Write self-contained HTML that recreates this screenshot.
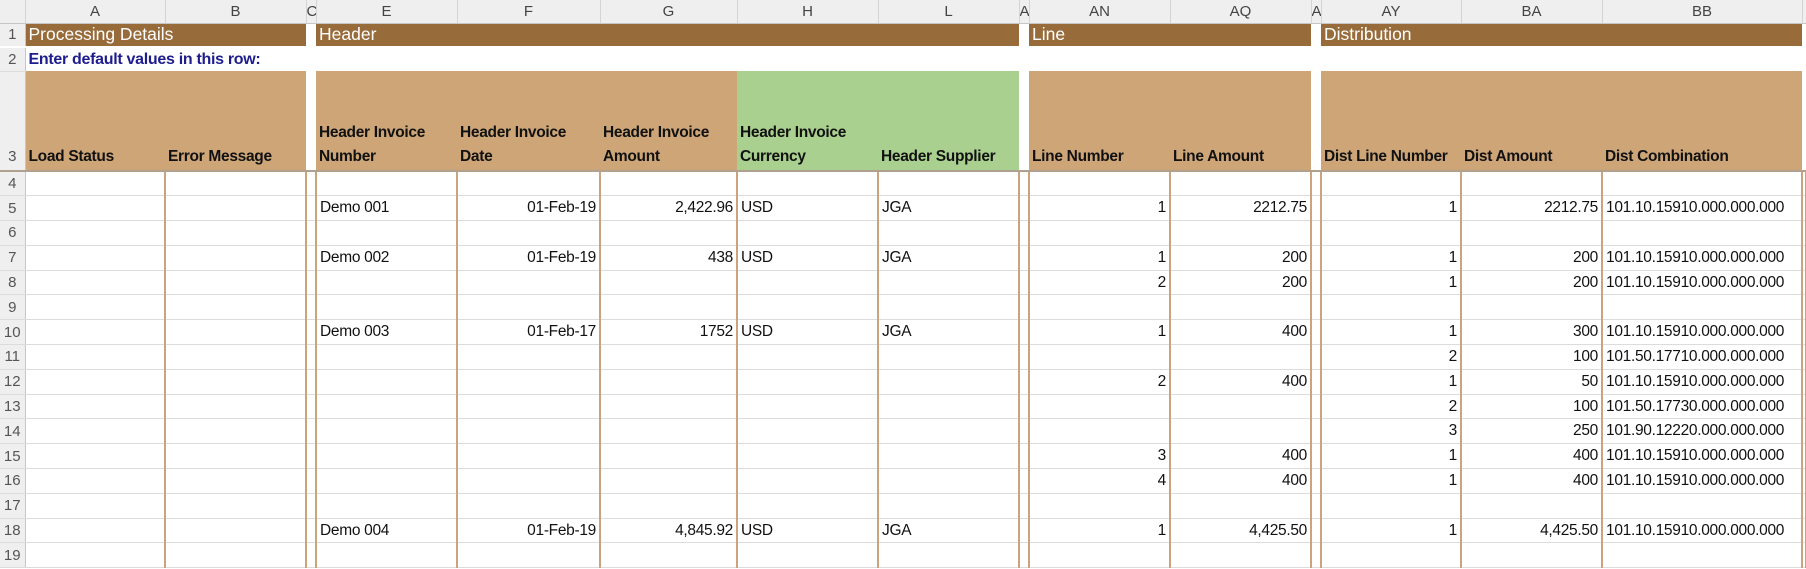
<!DOCTYPE html>
<html><head><meta charset="utf-8"><style>
body{margin:0;width:1806px;height:569px;overflow:hidden;background:#fff;font-family:"Liberation Sans",sans-serif;}
table{border-collapse:collapse;table-layout:fixed;width:1806px;font-size:15.5px;letter-spacing:-0.3px;color:#111;}
td{padding:0 3px;white-space:nowrap;overflow:hidden;height:24px;box-sizing:border-box;}
tr.ch td{height:23px;background:#efefef;color:#444;text-align:center;border-right:1px solid #d4d4d4;border-bottom:1px solid #c6c6c6;font-size:15px;padding:0;letter-spacing:0;}
td.rh{background:#efefef;color:#555;text-align:center;padding:0;font-size:15px;border-right:1px solid #c6c6c6;border-bottom:1px solid #dcdcdc;letter-spacing:0;}
tr.r1 td.b{background:#986c3a;color:#fff;font-size:17.5px;letter-spacing:0;}
tr.r1 td{border-bottom:2px solid #fff;}
tr.r2 td.t{color:#1d1d8e;font-weight:bold;font-size:16px;}
tr.r3 td{height:100px;vertical-align:bottom;font-weight:bold;line-height:24px;padding-bottom:1px;border-bottom:2px solid #b0a090;}
tr.r3 td.h{background:#cda577;}
tr.r3 td.g{background:#a9d08e;}
tr.d td{border-right:2px solid #c9a47c;border-bottom:1px solid #dcdcdc;height:24.8px;}
tr.d td.rh{border-right:1px solid #c6c6c6;}
.r{text-align:right;}
</style></head><body>
<table>
<colgroup><col style="width:25px"><col style="width:140px"><col style="width:141px"><col style="width:10px"><col style="width:141px"><col style="width:143px"><col style="width:137px"><col style="width:141px"><col style="width:141px"><col style="width:10px"><col style="width:141px"><col style="width:141px"><col style="width:10px"><col style="width:140px"><col style="width:141px"><col style="width:200px"><col style="width:4px"></colgroup>
<tr class="ch"><td></td><td>A</td><td>B</td><td>C</td><td>E</td><td>F</td><td>G</td><td>H</td><td>L</td><td>A</td><td>AN</td><td>AQ</td><td>A</td><td>AY</td><td>BA</td><td>BB</td><td></td></tr>
<tr class="r1"><td class="rh">1</td><td class="b" colspan="2">Processing Details</td><td></td><td class="b" colspan="5">Header</td><td></td><td class="b" colspan="2">Line</td><td></td><td class="b" colspan="3">Distribution</td><td></td></tr>
<tr class="r2"><td class="rh">2</td><td class="t" colspan="4">Enter default values in this row:</td><td colspan="12"></td></tr>
<tr class="r3"><td class="rh" style="font-weight:normal">3</td><td class="h">Load Status</td><td class="h">Error Message</td><td></td><td class="h">Header Invoice<br>Number</td><td class="h">Header Invoice<br>Date</td><td class="h">Header Invoice<br>Amount</td><td class="g">Header Invoice<br>Currency</td><td class="g">Header Supplier</td><td></td><td class="h">Line Number</td><td class="h">Line Amount</td><td></td><td class="h">Dist Line Number</td><td class="h">Dist Amount</td><td class="h">Dist Combination</td><td></td></tr>
<tr class="d"><td class="rh">4</td><td></td><td></td><td></td><td></td><td></td><td></td><td></td><td></td><td></td><td></td><td></td><td></td><td></td><td></td><td></td><td></td></tr>
<tr class="d"><td class="rh">5</td><td></td><td></td><td></td><td>Demo 001</td><td class="r">01-Feb-19</td><td class="r">2,422.96</td><td>USD</td><td>JGA</td><td></td><td class="r">1</td><td class="r">2212.75</td><td></td><td class="r">1</td><td class="r">2212.75</td><td>101.10.15910.000.000.000</td><td></td></tr>
<tr class="d"><td class="rh">6</td><td></td><td></td><td></td><td></td><td></td><td></td><td></td><td></td><td></td><td></td><td></td><td></td><td></td><td></td><td></td><td></td></tr>
<tr class="d"><td class="rh">7</td><td></td><td></td><td></td><td>Demo 002</td><td class="r">01-Feb-19</td><td class="r">438</td><td>USD</td><td>JGA</td><td></td><td class="r">1</td><td class="r">200</td><td></td><td class="r">1</td><td class="r">200</td><td>101.10.15910.000.000.000</td><td></td></tr>
<tr class="d"><td class="rh">8</td><td></td><td></td><td></td><td></td><td></td><td></td><td></td><td></td><td></td><td class="r">2</td><td class="r">200</td><td></td><td class="r">1</td><td class="r">200</td><td>101.10.15910.000.000.000</td><td></td></tr>
<tr class="d"><td class="rh">9</td><td></td><td></td><td></td><td></td><td></td><td></td><td></td><td></td><td></td><td></td><td></td><td></td><td></td><td></td><td></td><td></td></tr>
<tr class="d"><td class="rh">10</td><td></td><td></td><td></td><td>Demo 003</td><td class="r">01-Feb-17</td><td class="r">1752</td><td>USD</td><td>JGA</td><td></td><td class="r">1</td><td class="r">400</td><td></td><td class="r">1</td><td class="r">300</td><td>101.10.15910.000.000.000</td><td></td></tr>
<tr class="d"><td class="rh">11</td><td></td><td></td><td></td><td></td><td></td><td></td><td></td><td></td><td></td><td></td><td></td><td></td><td class="r">2</td><td class="r">100</td><td>101.50.17710.000.000.000</td><td></td></tr>
<tr class="d"><td class="rh">12</td><td></td><td></td><td></td><td></td><td></td><td></td><td></td><td></td><td></td><td class="r">2</td><td class="r">400</td><td></td><td class="r">1</td><td class="r">50</td><td>101.10.15910.000.000.000</td><td></td></tr>
<tr class="d"><td class="rh">13</td><td></td><td></td><td></td><td></td><td></td><td></td><td></td><td></td><td></td><td></td><td></td><td></td><td class="r">2</td><td class="r">100</td><td>101.50.17730.000.000.000</td><td></td></tr>
<tr class="d"><td class="rh">14</td><td></td><td></td><td></td><td></td><td></td><td></td><td></td><td></td><td></td><td></td><td></td><td></td><td class="r">3</td><td class="r">250</td><td>101.90.12220.000.000.000</td><td></td></tr>
<tr class="d"><td class="rh">15</td><td></td><td></td><td></td><td></td><td></td><td></td><td></td><td></td><td></td><td class="r">3</td><td class="r">400</td><td></td><td class="r">1</td><td class="r">400</td><td>101.10.15910.000.000.000</td><td></td></tr>
<tr class="d"><td class="rh">16</td><td></td><td></td><td></td><td></td><td></td><td></td><td></td><td></td><td></td><td class="r">4</td><td class="r">400</td><td></td><td class="r">1</td><td class="r">400</td><td>101.10.15910.000.000.000</td><td></td></tr>
<tr class="d"><td class="rh">17</td><td></td><td></td><td></td><td></td><td></td><td></td><td></td><td></td><td></td><td></td><td></td><td></td><td></td><td></td><td></td><td></td></tr>
<tr class="d"><td class="rh">18</td><td></td><td></td><td></td><td>Demo 004</td><td class="r">01-Feb-19</td><td class="r">4,845.92</td><td>USD</td><td>JGA</td><td></td><td class="r">1</td><td class="r">4,425.50</td><td></td><td class="r">1</td><td class="r">4,425.50</td><td>101.10.15910.000.000.000</td><td></td></tr>
<tr class="d"><td class="rh">19</td><td></td><td></td><td></td><td></td><td></td><td></td><td></td><td></td><td></td><td></td><td></td><td></td><td></td><td></td><td></td><td></td></tr>
</table>
</body></html>
